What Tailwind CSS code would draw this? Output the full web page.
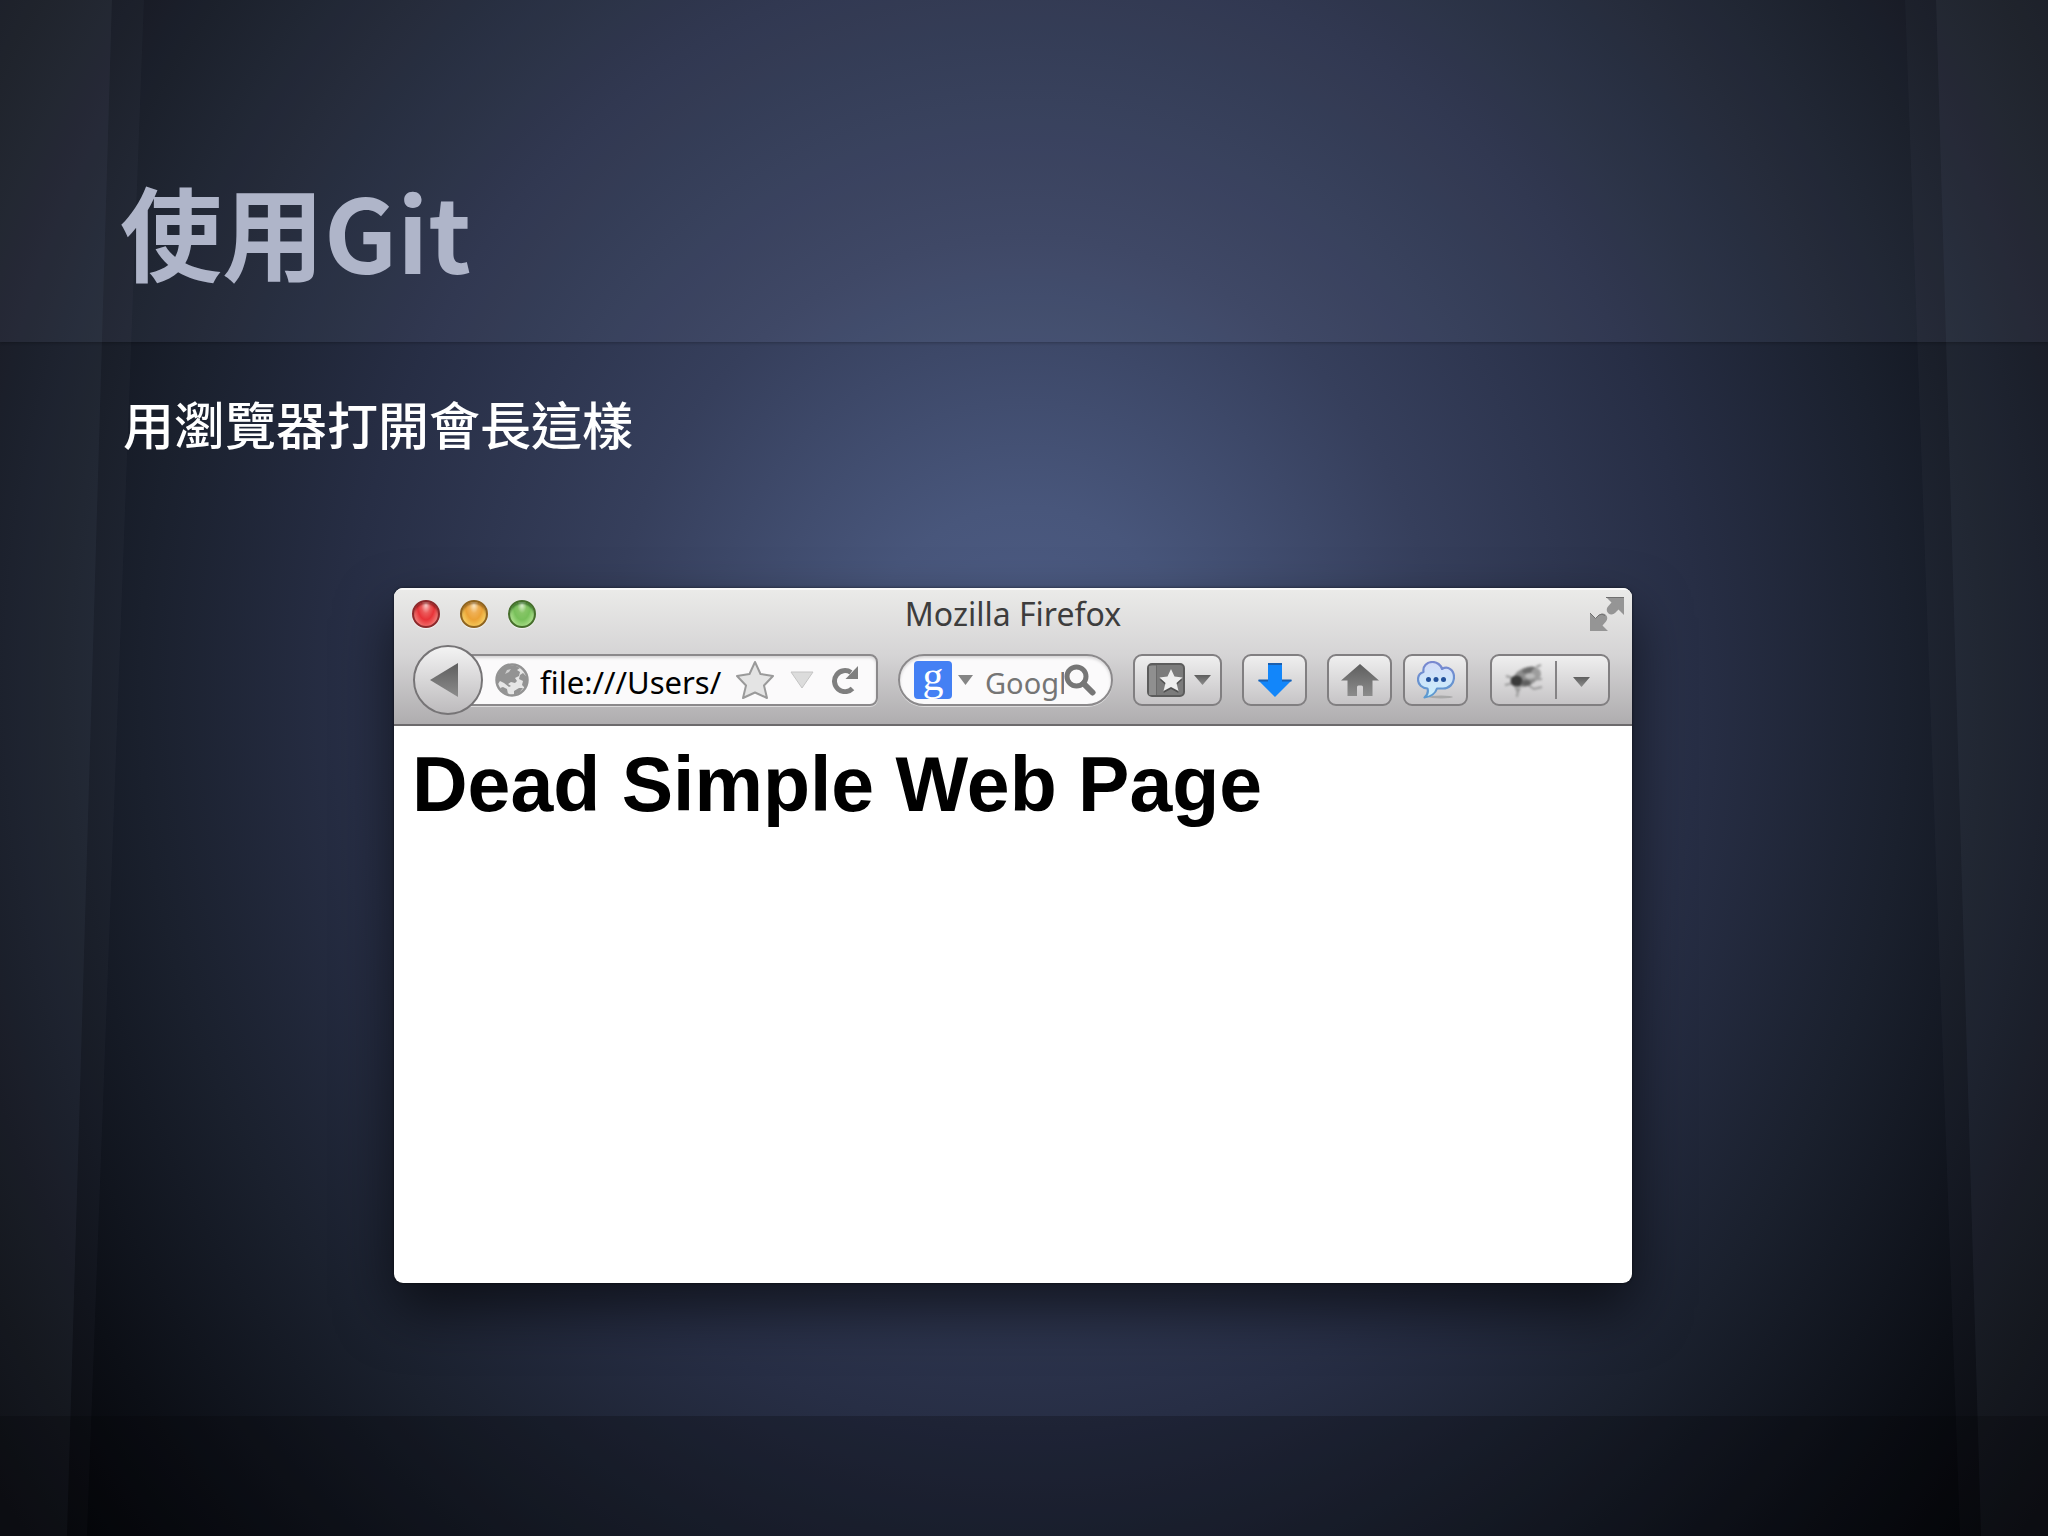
<!DOCTYPE html>
<html lang="zh-Hant">
  <head>
    <meta charset="UTF-8" />
    <meta name="viewport" content="width=device-width, initial-scale=1.0" />
    <title>使用Git</title>
    <script src="https://cdn.jsdelivr.net/npm/@tailwindcss/browser@4"></script>
  </head>
  <body
    class="relative isolate flex min-h-screen flex-col bg-[#030407] bg-[radial-gradient(1300px_1420px_at_50%_45%,#4f5e87_0%,#48567b_13%,#363f5c_32%,#272e45_52%,#1a202d_68%,#0c0f16_84%,#020305_97%)] font-['Noto_Sans','Noto_Sans_CJK_TC',sans-serif]"
  >
    <!-- Side panels -->
    <svg
      class="absolute inset-0 -z-10 h-full w-full"
      viewBox="0 0 2048 1536"
      preserveAspectRatio="none"
      fill="#b4c8ee"
      aria-hidden="true"
    >
      <path d="M0 0H144L87 1536H0z" fill-opacity=".03" />
      <path d="M0 0H112L67 1536H0z" fill-opacity=".05" />
      <path d="M2048 0H1905L1960 1536H2048z" fill-opacity=".03" />
      <path d="M2048 0H1936L1981 1536H2048z" fill-opacity=".05" />
    </svg>

    <!-- Slide title -->
    <header class="flex h-[342px] items-end bg-[#b4c8ee]/7 px-[120px] pb-[42px] shadow-[0_1px_3px_rgba(0,0,0,0.25)]">
      <h1 class="font-['Noto_Sans_CJK_TC',sans-serif] text-[102px] leading-[140px] font-bold text-[#afb5c9]">使用Git</h1>
    </header>

    <main class="flex-1 pr-[416px] pb-[133px] pl-[394px]">
      <p class="-ml-[271px] pt-[45px] font-['Noto_Sans_CJK_TC',sans-serif] text-[51px] leading-[72px] font-medium text-white">用瀏覽器打開會長這樣</p>

      <!-- Browser window -->
      <section class="mt-[129px] overflow-hidden rounded-[9px] bg-white shadow-[0_26px_56px_rgba(0,0,0,0.6),0_0_3px_rgba(0,0,0,0.6)]">
        <div class="border-b-2 border-[#6c6a6c] bg-linear-to-b from-[#ebebe9] via-[#d5d4d5] to-[#afadaf] pb-1 shadow-[inset_0_2px_0_rgba(255,255,255,0.7)]">
          <!-- Title bar -->
          <div class="grid h-[52px] grid-cols-[1fr_auto_1fr] items-center px-2">
            <div class="flex gap-5 pl-2.5">
              <button aria-label="Close" class="size-7 rounded-full border-2 border-[#8c2a2c] bg-[radial-gradient(ellipse_at_50%_12%,#fbd0cd_0%,#ec5a5a_28%,#e83338_50%,#f06a68_72%,#fbb8b0_100%)] shadow-[0_1px_1px_rgba(255,255,255,0.7),inset_0_2px_2px_rgba(90,0,0,0.5)]"></button>
              <button aria-label="Minimize" class="size-7 rounded-full border-2 border-[#8f6420] bg-[radial-gradient(ellipse_at_50%_12%,#fdeccb_0%,#efb055_28%,#eba236_50%,#f4c558_72%,#fcf0a0_100%)] shadow-[0_1px_1px_rgba(255,255,255,0.7),inset_0_2px_2px_rgba(90,50,0,0.5)]"></button>
              <button aria-label="Zoom" class="size-7 rounded-full border-2 border-[#466f2c] bg-[radial-gradient(ellipse_at_50%_12%,#dff3d2_0%,#86c566_28%,#78c05a_50%,#a0d981_72%,#d8f5b4_100%)] shadow-[0_1px_1px_rgba(255,255,255,0.7),inset_0_2px_2px_rgba(0,50,0,0.5)]"></button>
            </div>
            <h2 class="text-[32px] leading-10 text-[#3d3d3d]">Mozilla Firefox</h2>
            <button aria-label="Full screen" class="justify-self-end">
              <svg class="size-[34px]" viewBox="0 0 34 34" fill="#959595">
                <path d="M16 0H34V18L28.500 12.500L25 16A4.500 4.500 0 0 1 18 9.500L21.500 5.500z" />
                <path d="M18 34H0V16L5.500 21.500L9 18A4.500 4.500 0 0 1 16 24.500L12.500 28.500z" />
                <path d="M16 0.500H34M0 16L5.500 21.500L9 18Q12 16 15 18.500" fill="none" stroke="#6f6f6f" />
              </svg>
            </button>
          </div>

          <!-- Toolbar -->
          <div class="flex h-20 items-center pr-[22px] pl-[19px]">
            <button aria-label="Back" class="z-10 -mr-6 flex size-[70px] shrink-0 items-center justify-center rounded-full border-2 border-[#767476] bg-linear-to-b from-[#f3f3f3] to-[#bdbbbd]">
              <svg class="mr-2 h-[34px] w-7" viewBox="0 0 28 34">
                <defs>
                  <linearGradient id="glyph" x2="0" y2="1">
                    <stop offset="0" stop-color="#5e5e5e" />
                    <stop offset="1" stop-color="#8c8c8c" />
                  </linearGradient>
                </defs>
                <path d="M0 17L28 0V34z" fill="url(#glyph)" />
              </svg>
            </button>

            <label class="flex h-[52px] min-w-0 flex-1 items-center rounded-r-[8px] border-2 border-[#8b898b] bg-[#fbfafb] pr-[17px] pl-[34px] shadow-[inset_0_2px_3px_rgba(0,0,0,0.15),0_1px_0_rgba(255,255,255,0.5)]">
              <svg class="mr-[11px] size-[34px] shrink-0" viewBox="0 0 34 34">
                <circle cx="17" cy="17" r="15.500" fill="#e6e6e6" stroke="#939393" stroke-width="2.500" />
                <path d="M4 10C7 4 14 1 21 3L25 5L22 7L25 9L24 13L20 15L22 18L20 20L16 19L13 21L16 23L14 24L9 20L5 18L3 21L1 17z" fill="#939393" />
                <path d="M25 12L28 10L33 15V20L30 25L27 22L28 18L24 16zM8 24L12 26L13 31L8 29L5 25zM19 28L24 25L28 25L24 30L19 32z" fill="#939393" />
                <path d="M12 7L16 6L14 9L10 11z" fill="#cfcfcf" />
              </svg>
              <input type="text" aria-label="Address" value="file:///Users/" class="mr-3 h-11 w-0 min-w-0 flex-1 pt-1 text-[31px] text-black outline-none" />
              <svg class="mr-4 h-10 w-[38px] shrink-0" viewBox="0 0 38 40">
                <path d="M19 2L24.500 14L37 16L28 25.500L31 38L19 32.500L7 38L10 25.500L1 16L13.500 14z" fill="#e4e4e4" stroke="#9a9a9a" stroke-width="2" stroke-linejoin="round" />
              </svg>
              <svg class="mr-[17px] h-[18px] w-6 shrink-0" viewBox="0 0 24 18">
                <path d="M1 1H23L12 17z" fill="#dcdcdc" stroke="#c4c4c4" />
              </svg>
              <svg class="size-7 shrink-0" viewBox="0 0 28 28">
                <path d="M21.500 22.500A10.500 10.500 0 1 1 20 6.500" fill="none" stroke="#7f7f7f" stroke-width="5" />
                <path d="M27 0V13H14.500z" fill="#7f7f7f" />
              </svg>
            </label>

            <label class="ml-5 flex h-[52px] w-[215px] shrink-0 items-center rounded-full border-2 border-[#8b898b] bg-[#fbfafb] pl-3.5 shadow-[inset_0_2px_3px_rgba(0,0,0,0.15),0_1px_0_rgba(255,255,255,0.5)]">
              <span class="mr-1.5 flex size-[38px] shrink-0 justify-center overflow-hidden rounded-[4px] bg-[#4480f4] font-['Liberation_Serif',serif] text-[42px] leading-[30px] text-white">g</span>
              <svg class="mr-3 h-2.5 w-[15px] shrink-0" viewBox="0 0 15 10">
                <path d="M0 0H15L7.500 10z" fill="#858585" />
              </svg>
              <input type="text" aria-label="Search" placeholder="Google" class="h-11 w-[79px] pt-1 text-[29px] outline-none placeholder:text-[#757575]" />
              <svg class="size-8 shrink-0" viewBox="0 0 32 32" fill="none" stroke="#767676">
                <circle cx="12.500" cy="12.500" r="9.500" stroke-width="5" />
                <path d="M19.500 19.500L28.500 28.500" stroke-width="6" stroke-linecap="round" />
              </svg>
            </label>

            <button aria-label="Bookmarks" class="ml-5 flex h-[52px] w-[89px] shrink-0 items-center rounded-[9px] border-2 border-[#817f81] bg-linear-to-b from-[#efefef] to-[#c6c4c6] pl-3">
              <svg class="mr-[9px] h-[34px] w-[38px]" viewBox="0 0 38 34">
                <rect x="1" y="1" width="36" height="32" rx="4" fill="#7b7b7b" stroke="#5c5c5c" stroke-width="2" />
                <path d="M2 3H9V32H2z" fill="#8f8f8f" />
                <path d="M9.500 2V32" stroke="#696969" />
                <path d="M24 8L27.500 15.500L35.500 16.500L29.500 22L31.500 30L24 26L16.500 30L18.500 22L12.500 16.500L20.500 15.500z" fill="#505050" />
                <path d="M24 6L27.500 13.500L35.500 14.500L29.500 20L31.500 28L24 24L16.500 28L18.500 20L12.500 14.500L20.500 13.500z" fill="#ededed" />
              </svg>
              <svg class="h-2.5 w-[17px]" viewBox="0 0 17 10">
                <path d="M0 0H17L8.500 10z" fill="url(#glyph)" />
              </svg>
            </button>

            <button aria-label="Downloads" class="ml-5 flex h-[52px] w-[65px] shrink-0 items-center justify-center rounded-[9px] border-2 border-[#817f81] bg-linear-to-b from-[#efefef] to-[#c6c4c6]">
              <svg class="size-[34px]" viewBox="0 0 34 34">
                <path d="M10 0H24V17H34L17 34L0 17H10z" fill="#1286fa" />
                <path d="M10 1H24M0.500 17.500H10M24 17.500H33.500" stroke="#1b5fae" stroke-width="2" />
              </svg>
            </button>

            <button aria-label="Home" class="ml-5 flex h-[52px] w-[65px] shrink-0 items-center justify-center rounded-[9px] border-2 border-[#817f81] bg-linear-to-b from-[#efefef] to-[#c6c4c6]">
              <svg class="h-8 w-[38px]" viewBox="0 0 38 32">
                <path d="M19 0L38 16.500H31.500V32H22V23Q22 21.500 20.500 21.500H17.500Q16 21.500 16 23V32H6.500V16.500H0z" fill="url(#glyph)" />
              </svg>
            </button>

            <button aria-label="Messages" class="ml-[11px] flex h-[52px] w-[65px] shrink-0 items-center justify-center rounded-[9px] border-2 border-[#817f81] bg-linear-to-b from-[#efefef] to-[#c6c4c6]">
              <svg class="size-[38px]" viewBox="0 0 38 38">
                <defs>
                  <linearGradient id="cloud" x2="0" y2="1">
                    <stop offset="0" stop-color="#d3daf8" />
                    <stop offset="1" stop-color="#c9effb" />
                  </linearGradient>
                  <linearGradient id="cloudEdge" x2="0" y2="1">
                    <stop offset="0" stop-color="#7a88d0" />
                    <stop offset="1" stop-color="#5c9bd0" />
                  </linearGradient>
                </defs>
                <ellipse cx="24" cy="36" rx="12" ry="1.500" fill="#a9a9a9" />
                <path d="M6.500 11C5.500 5 10 1 15.500 1C20 1 24 4 25 8C31 4.500 37 9 37 16C37 23 32 27.500 26 27.500H20C18.500 32 14 36 7.500 36.500C10.500 34 11.500 31 10.500 27.500C5 27 1 23.500 1 18.500C1 15 3 12 6.500 11z" fill="url(#cloud)" stroke="url(#cloudEdge)" stroke-width="2.200" stroke-linejoin="round" />
                <g fill="#23519b">
                  <circle cx="11.500" cy="18.500" r="2.500" />
                  <circle cx="19" cy="18.500" r="2.500" />
                  <circle cx="26.500" cy="18.500" r="2.500" />
                </g>
              </svg>
            </button>

            <div class="ml-[22px] flex h-[52px] w-[120px] shrink-0 items-center rounded-[9px] border-2 border-[#817f81] bg-linear-to-b from-[#efefef] to-[#c6c4c6]">
              <button aria-label="Firebug" class="flex h-[38px] w-[65px] items-center justify-center border-r-2 border-[#858385]">
                <svg class="h-9 w-10 blur-[1px]" viewBox="0 0 40 36">
                  <path d="M2 14L12 17M1 23L10 21M14 27L13 35M24 23L30 27L38 25M28 18L38 17M32 5L37 3" stroke="#9b9b9b" stroke-width="2" fill="none" />
                  <ellipse cx="22" cy="15" rx="14" ry="9" transform="rotate(-25 22 15)" fill="#8c8c8c" />
                  <ellipse cx="25" cy="8" rx="7" ry="3" transform="rotate(-15 25 8)" fill="#6c6c6c" />
                  <ellipse cx="32" cy="12" rx="5" ry="6" fill="#9d9d9d" />
                  <ellipse cx="26" cy="14" rx="5" ry="3" fill="#bcbcbc" />
                  <ellipse cx="12.500" cy="19" rx="6" ry="5.500" fill="#3a3a3a" />
                  <ellipse cx="22" cy="21" rx="5" ry="3" fill="#606060" />
                  <path d="M10 25L14 32L17 26z" fill="#9a9a9a" />
                </svg>
              </button>
              <button aria-label="Firebug options" class="flex h-full flex-1 items-center justify-center pt-1 pr-0.5">
                <svg class="h-2.5 w-[17px]" viewBox="0 0 17 10">
                  <path d="M0 0H17L8.500 10z" fill="url(#glyph)" />
                </svg>
              </button>
            </div>
          </div>
        </div>

        <!-- Page content -->
        <article class="min-h-[557px] px-[18px] pt-3.5">
          <h3 class="font-['Liberation_Sans',sans-serif] text-[77px] leading-[88px] font-bold text-black">Dead Simple Web Page</h3>
        </article>
      </section>
    </main>

    <footer class="h-[120px] bg-[#020308]/25"></footer>
  </body>
</html>
